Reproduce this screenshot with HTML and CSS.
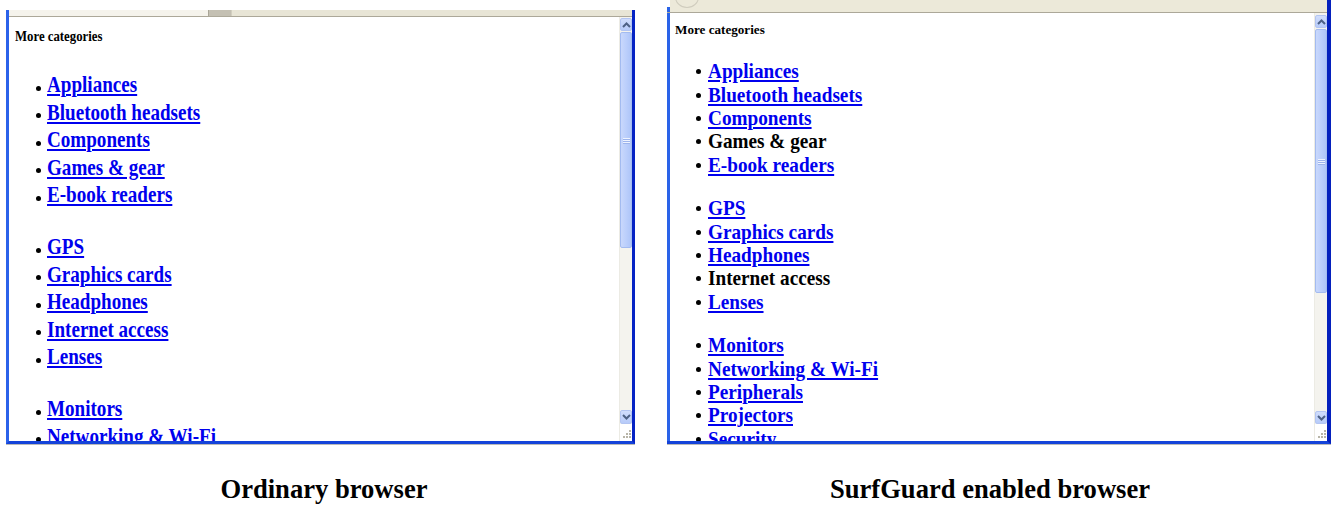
FILE: index.html
```html
<!DOCTYPE html>
<html lang="en">
<head>
<meta charset="utf-8">
<title>Ordinary vs SurfGuard browser</title>
<link rel="stylesheet" href="styles.css">
</head>
<body>
<div class="page">
  <figure class="fig fig-left">
    <div class="window win-left">
      <div class="strip strip-left"><span class="hthumb"></span><span class="hrest"></span></div>
      <div class="wbody">
        <div class="content content-left">
          <p class="heading">More categories</p>
          <ul class="group">
            <li class="item"><a class="lnk">Appliances</a></li>
            <li class="item"><a class="lnk">Bluetooth headsets</a></li>
            <li class="item"><a class="lnk">Components</a></li>
            <li class="item"><a class="lnk">Games &amp; gear</a></li>
            <li class="item"><a class="lnk">E-book readers</a></li>
          </ul>
          <ul class="group">
            <li class="item"><a class="lnk">GPS</a></li>
            <li class="item"><a class="lnk">Graphics cards</a></li>
            <li class="item"><a class="lnk">Headphones</a></li>
            <li class="item"><a class="lnk">Internet access</a></li>
            <li class="item"><a class="lnk">Lenses</a></li>
          </ul>
          <ul class="group">
            <li class="item"><a class="lnk">Monitors</a></li>
            <li class="item"><a class="lnk">Networking &amp; Wi-Fi</a></li>
          </ul>
        </div>
        <div class="vscroll vs-left">
          <div class="sbtn sbtn-up"><svg width="9" height="6" viewBox="0 0 9 6"><path d="M1 5 L4.5 1.5 L8 5" fill="none" stroke="#4d6185" stroke-width="2"/></svg></div>
          <div class="thumb"><svg width="7" height="7" viewBox="0 0 7 7"><path d="M0 1.5H7M0 3.5H7M0 5.5H7" stroke="#eef3ff" stroke-width="1"/><path d="M0 2.5H7M0 4.5H7M0 6.5H7" stroke="#9db4ec" stroke-width="1"/></svg></div>
          <div class="track"></div>
          <div class="sbtn sbtn-down"><svg width="9" height="6" viewBox="0 0 9 6"><path d="M1 1 L4.5 4.5 L8 1" fill="none" stroke="#4d6185" stroke-width="2"/></svg></div>
          <div class="corner"><svg width="10" height="10" viewBox="0 0 10 10"><g fill="#b8b5a8"><rect x="7" y="1" width="2" height="2"/><rect x="4" y="4" width="2" height="2"/><rect x="7" y="4" width="2" height="2"/><rect x="1" y="7" width="2" height="2"/><rect x="4" y="7" width="2" height="2"/><rect x="7" y="7" width="2" height="2"/></g></svg></div>
        </div>
      </div>
    </div>
    <figcaption class="caption cap-left">Ordinary browser</figcaption>
  </figure>

  <figure class="fig fig-right">
    <div class="window win-right">
      <div class="strip strip-right"><span class="tabarc"></span></div>
      <div class="wbody">
        <div class="content content-right">
          <p class="heading">More categories</p>
          <ul class="group">
            <li class="item"><a class="lnk">Appliances</a></li>
            <li class="item"><a class="lnk">Bluetooth headsets</a></li>
            <li class="item"><a class="lnk">Components</a></li>
            <li class="item"><span class="plain">Games &amp; gear</span></li>
            <li class="item"><a class="lnk">E-book readers</a></li>
          </ul>
          <ul class="group">
            <li class="item"><a class="lnk">GPS</a></li>
            <li class="item"><a class="lnk">Graphics cards</a></li>
            <li class="item"><a class="lnk">Headphones</a></li>
            <li class="item"><span class="plain">Internet access</span></li>
            <li class="item"><a class="lnk">Lenses</a></li>
          </ul>
          <ul class="group">
            <li class="item"><a class="lnk">Monitors</a></li>
            <li class="item"><a class="lnk">Networking &amp; Wi-Fi</a></li>
            <li class="item"><a class="lnk">Peripherals</a></li>
            <li class="item"><a class="lnk">Projectors</a></li>
            <li class="item"><a class="lnk">Security</a></li>
          </ul>
        </div>
        <div class="vscroll vs-right">
          <div class="sbtn sbtn-up"><svg width="9" height="6" viewBox="0 0 9 6"><path d="M1 5 L4.5 1.5 L8 5" fill="none" stroke="#4d6185" stroke-width="2"/></svg></div>
          <div class="thumb"><svg width="7" height="7" viewBox="0 0 7 7"><path d="M0 1.5H7M0 3.5H7M0 5.5H7" stroke="#eef3ff" stroke-width="1"/><path d="M0 2.5H7M0 4.5H7M0 6.5H7" stroke="#9db4ec" stroke-width="1"/></svg></div>
          <div class="track"></div>
          <div class="sbtn sbtn-down"><svg width="9" height="6" viewBox="0 0 9 6"><path d="M1 1 L4.5 4.5 L8 1" fill="none" stroke="#4d6185" stroke-width="2"/></svg></div>
          <div class="corner"><svg width="10" height="10" viewBox="0 0 10 10"><g fill="#b8b5a8"><rect x="7" y="1" width="2" height="2"/><rect x="4" y="4" width="2" height="2"/><rect x="7" y="4" width="2" height="2"/><rect x="1" y="7" width="2" height="2"/><rect x="4" y="7" width="2" height="2"/><rect x="7" y="7" width="2" height="2"/></g></svg></div>
        </div>
      </div>
    </div>
    <figcaption class="caption cap-right">SurfGuard enabled browser</figcaption>
  </figure>
</div>
</body>
</html>
```

FILE: styles.css
```css
* { box-sizing: border-box; }

html, body {
  margin: 0;
  padding: 0;
  background: #ffffff;
}

body {
  font-family: "Liberation Serif", "Times New Roman", serif;
  color: #000;
  width: 1333px;
  height: 511px;
  overflow: hidden;
}

.page {
  display: flex;
  align-items: flex-start;
}

.fig {
  margin: 0;
  display: flex;
  flex-direction: column;
}

.fig-left {
  width: 629px;
  margin-left: 6px;
  margin-top: 10px;
}

.fig-right {
  width: 664px;
  margin-left: 32px;
}

/* window frame */
.window {
  display: flex;
  flex-direction: column;
  border-bottom: 3px solid #1443d9;
  box-shadow: 0 1px 0 #b9b9b9;
}

.win-left {
  height: 434px;
  border-left: 3px solid #2b62ea;
  border-right: 3px solid #0523c4;
}

.win-right {
  height: 444px;
  border-right: 4px solid #0420bd;
}

.strip {
  flex: none;
  border-bottom: 1px solid #aca899;
  display: flex;
}

.strip-left {
  height: 7px;
  background: #f5f3ec;
}

.hthumb {
  width: 23px;
  margin-left: 199px;
  background: #c4c0b3;
  border-left: 1px solid #a8a496;
}

.hrest {
  flex: 1;
  background: #e8e5d6;
  border-left: 1px solid #d2cfc0;
}

.strip-right {
  height: 13px;
  background: linear-gradient(#ffffff 7px, #2a63e8 7px) 0 0 / 3px 100% no-repeat, #ece9d9;
  position: relative;
  overflow: hidden;
}

.tabarc {
  position: absolute;
  left: 8px;
  top: -14px;
  width: 24px;
  height: 22px;
  border-radius: 50%;
  border: 1px solid #cfccbd;
}

.wbody {
  flex: 1;
  display: flex;
  min-height: 0;
  background: #ffffff;
}

.win-right .wbody {
  border-left: 3px solid #2a63e8;
}

.content {
  flex: 1;
  overflow: hidden;
  min-width: 0;
}

.heading {
  margin: 0;
  line-height: 16px;
  white-space: nowrap;
  font-weight: bold;
  transform-origin: left center;
}

.group {
  list-style: none;
  margin: 0;
  padding: 0;
}

.item {
  display: flex;
  align-items: flex-start;
  white-space: nowrap;
  font-weight: bold;
}

.item::before {
  content: "";
  flex: none;
  width: 5px;
  height: 5px;
  border-radius: 50%;
  background: #000;
}

.lnk {
  display: inline-block;
  color: #0000ee;
  text-decoration: underline;
  text-decoration-thickness: 2px;
  text-underline-offset: 2px;
  transform-origin: left center;
}

.plain {
  display: inline-block;
  color: #000;
  transform-origin: left center;
}

/* left (ordinary) */
.content-left {
  padding-left: 6px;
}

.content-left .heading {
  font-size: 13.6px;
  margin-top: 12px;
  transform: scaleX(0.94);
}

.content-left .group {
  margin-top: 24.5px;
  padding-left: 20.5px;
}

.content-left .group:first-of-type {
  margin-top: 26.25px;
}

.content-left .item {
  height: 27.5px;
  line-height: 27.5px;
  font-size: 23px;
}

.content-left .item::before {
  margin-top: 14.5px;
  margin-right: 6.5px;
}

.content-left .lnk,
.content-left .plain {
  transform: scaleX(0.83);
}

/* right (SurfGuard) */
.content-right {
  padding-left: 5px;
}

.content-right .heading {
  font-size: 13.4px;
  margin-top: 9px;
  transform: scaleX(0.98);
}

.content-right .group {
  margin-top: 20.5px;
  padding-left: 21px;
}

.content-right .group:first-of-type {
  margin-top: 22.35px;
}

.content-right .item {
  height: 23.3px;
  line-height: 23.3px;
  font-size: 21px;
}

.content-right .item::before {
  margin-top: 9px;
  margin-right: 7px;
}

.content-right .lnk,
.content-right .plain {
  transform: scaleX(0.915);
}

/* vertical scrollbar */
.vscroll {
  flex: none;
  width: 13px;
  display: flex;
  flex-direction: column;
  align-items: stretch;
  background: #f4f3ee;
  border-left: 1px solid #ecebe4;
}

.sbtn {
  flex: none;
  height: 13px;
  border-radius: 2px;
  background: linear-gradient(#d0ddfc, #b7cbf9);
  border: 1px solid #b3c5f2;
  display: flex;
  align-items: center;
  justify-content: center;
}

.thumb {
  flex: none;
  margin-top: 1px;
  border-radius: 2px;
  background: linear-gradient(90deg, #c9d8fc, #b9cdfb 60%, #aec5f8);
  border: 1px solid #a3bbf0;
  display: flex;
  align-items: center;
  justify-content: center;
}

.track {
  flex: 1;
}

.corner {
  flex: none;
  height: 17px;
  display: flex;
  align-items: flex-end;
  justify-content: flex-end;
  padding: 0 0 2px 0;
  background: #ffffff;
}

.vs-left .sbtn-up { margin-top: 1px; }
.vs-left .thumb { height: 216px; }
.vs-left .sbtn-down { height: 14px; }

.vs-right .sbtn-up { margin-top: 2px; }
.vs-right .thumb { height: 264px; }

/* captions */
.caption {
  margin-top: 30px;
  font-size: 26.6px;
  line-height: 30px;
  font-weight: bold;
  text-align: center;
  white-space: nowrap;
}

.cap-left { padding-left: 7px; }
.cap-right { padding-right: 18px; }
```
